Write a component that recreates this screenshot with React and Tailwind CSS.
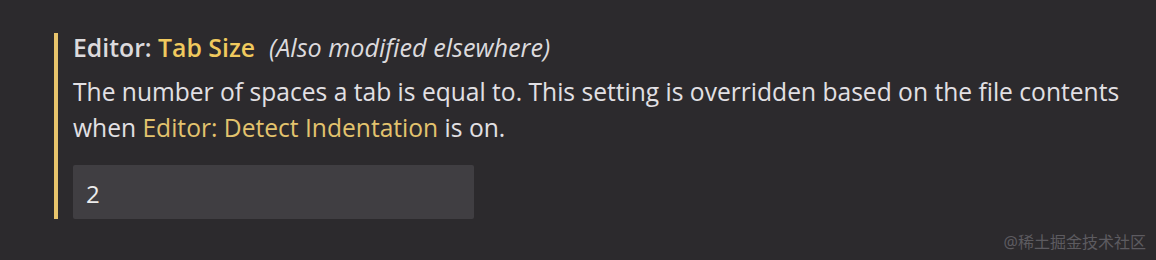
export default function App() {
  return (
    <div
      className="relative w-[1156px] h-[260px] bg-[#2c2a2d] overflow-hidden"
      style={{ fontFamily: '"Open Sans", "Noto Sans", sans-serif' }}
    >
      {/* Setting item */}
      <div className="pt-[33px] pl-[54px]">
        <div className="border-l-[4px] border-[#e8c46c] pl-[15px] h-[186px]">
          <div className="text-[24.8px] leading-[28px] text-[#dcdadd] whitespace-nowrap">
            <span className="font-semibold">Editor: </span>
            <span className="font-semibold text-[#f0c95e]">Tab Size</span>
            <span className="italic text-[25.2px] ml-[14px]">(Also modified elsewhere)</span>
          </div>
          <p className="mt-[13px] text-[24.6px] leading-[36px] text-[#e2e0e4] w-[1075px]">
            The number of spaces a tab is equal to. This setting is overridden based on the file contents when{" "}
            <span className="text-[#e3c36e]">Editor: Detect Indentation</span> is on.
          </p>
          <div className="mt-[19px] w-[401px] h-[54px] bg-[#403e42] rounded-[2px] flex items-center pl-[13px] pt-[3px] text-[24px] text-[#ececec]">
            2
          </div>
        </div>
      </div>

      {/* Watermark */}
      <div
        className="absolute right-[10px] bottom-[6px] text-[16px] text-[#5d5b60]"
        style={{ fontFamily: '"Noto Sans", "Noto Sans CJK SC", sans-serif' }}
      >
        @稀土掘金技术社区
      </div>
    </div>
  );
}
